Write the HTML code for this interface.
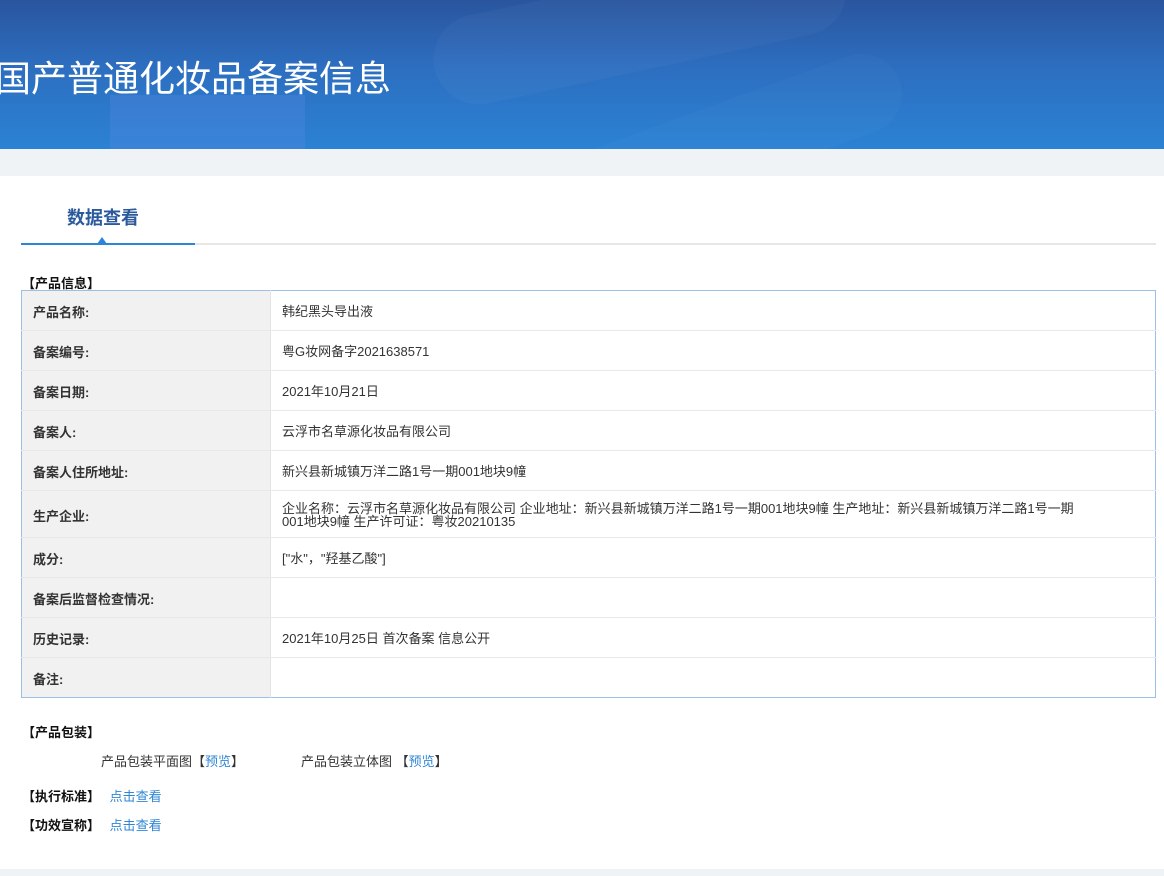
<!DOCTYPE html>
<html><head><meta charset="utf-8"><style>
*{margin:0;padding:0;box-sizing:border-box}
body{width:1164px;height:876px;overflow:hidden;background:#fff;font-family:"Liberation Sans","Noto Sans CJK SC",sans-serif;font-size:13px;color:#333;position:relative}
.hdr{position:absolute;left:0;top:0;width:1164px;height:149px;background:linear-gradient(180deg,#2a559e 0%,#2d6ec0 45%,#2b82d4 100%);overflow:hidden}
.hdr .b1{position:absolute;left:430px;top:-20px;width:420px;height:90px;border-radius:45px;background:rgba(255,255,255,0.03);transform:rotate(-12deg)}
.hdr .b2{position:absolute;left:110px;top:95px;width:195px;height:60px;background:rgba(90,140,230,0.3)}
.hdr .b3{position:absolute;left:560px;top:100px;width:350px;height:80px;border-radius:40px;background:rgba(255,255,255,0.025);transform:rotate(-20deg)}
.hdr h1{position:absolute;left:-5px;top:54px;font-size:36px;font-weight:normal;color:#fff;font-family:"Noto Sans CJK SC",sans-serif;line-height:44px}
.gray{position:absolute;left:0;top:149px;width:1164px;height:27px;background:#eff3f6}
.tab{position:absolute;left:67px;top:204px;font-size:18px;font-weight:bold;color:#2a5a9c}
.tl{position:absolute;left:21px;top:243px;width:1135px;height:2px;background:#e6e6e6}
.tl2{position:absolute;left:21px;top:243px;width:174px;height:2px;background:#2b86d8}
.tri{position:absolute;left:97px;top:237px;width:0;height:0;border-left:5px solid transparent;border-right:5px solid transparent;border-bottom:7px solid #2b86d8}
.sec{position:absolute;font-weight:bold;color:#111;font-size:13px}
table{position:absolute;left:21px;top:290px;width:1135px;border-collapse:collapse;border:1px solid #9dbfe6}
td{border-bottom:1px solid #e8e8e8;height:40px;padding:2px 11px 0;vertical-align:middle}
td.l{width:249px;background:#f1f1f1;font-weight:bold;color:#333;border-right:1px solid #e4e4e4}
td.v{color:#333;line-height:13px}
a{color:#2f86d6;text-decoration:none}
.foot{position:absolute;left:0;top:869px;width:1164px;height:7px;background:#eff3f6}
</style></head><body>
<div class="hdr"><div class="b1"></div><div class="b3"></div><div class="b2"></div><h1>国产普通化妆品备案信息</h1></div>
<div class="gray"></div>
<div class="tab">数据查看</div>
<div class="tl"></div><div class="tl2"></div><div class="tri"></div>
<div class="sec" style="left:22px;top:273px">【产品信息】</div>
<table>
<tr><td class="l">产品名称:</td><td class="v">韩纪黑头导出液</td></tr>
<tr><td class="l">备案编号:</td><td class="v">粤G妆网备字2021638571</td></tr>
<tr><td class="l">备案日期:</td><td class="v">2021年10月21日</td></tr>
<tr><td class="l">备案人:</td><td class="v">云浮市名草源化妆品有限公司</td></tr>
<tr><td class="l">备案人住所地址:</td><td class="v">新兴县新城镇万洋二路1号一期001地块9幢</td></tr>
<tr><td class="l" style="height:47px">生产企业:</td><td class="v" style="height:47px">企业名称：云浮市名草源化妆品有限公司 企业地址：新兴县新城镇万洋二路1号一期001地块9幢 生产地址：新兴县新城镇万洋二路1号一期<br>001地块9幢 生产许可证：粤妆20210135</td></tr>
<tr><td class="l">成分:</td><td class="v">["水"，"羟基乙酸"]</td></tr>
<tr><td class="l">备案后监督检查情况:</td><td class="v"></td></tr>
<tr><td class="l">历史记录:</td><td class="v">2021年10月25日 首次备案 信息公开</td></tr>
<tr><td class="l" style="border-bottom:none">备注:</td><td class="v" style="border-bottom:none"></td></tr>
</table>
<div class="sec" style="left:22px;top:722px">【产品包装】</div>
<div style="position:absolute;left:101px;top:751px">产品包装平面图【<a>预览</a>】</div>
<div style="position:absolute;left:301px;top:751px">产品包装立体图 【<a>预览</a>】</div>
<div class="sec" style="left:22px;top:786px">【执行标准】 <a style="font-weight:normal;margin-left:6px">点击查看</a></div>
<div class="sec" style="left:22px;top:815px">【功效宣称】 <a style="font-weight:normal;margin-left:6px">点击查看</a></div>
<div class="foot"></div>
</body></html>
